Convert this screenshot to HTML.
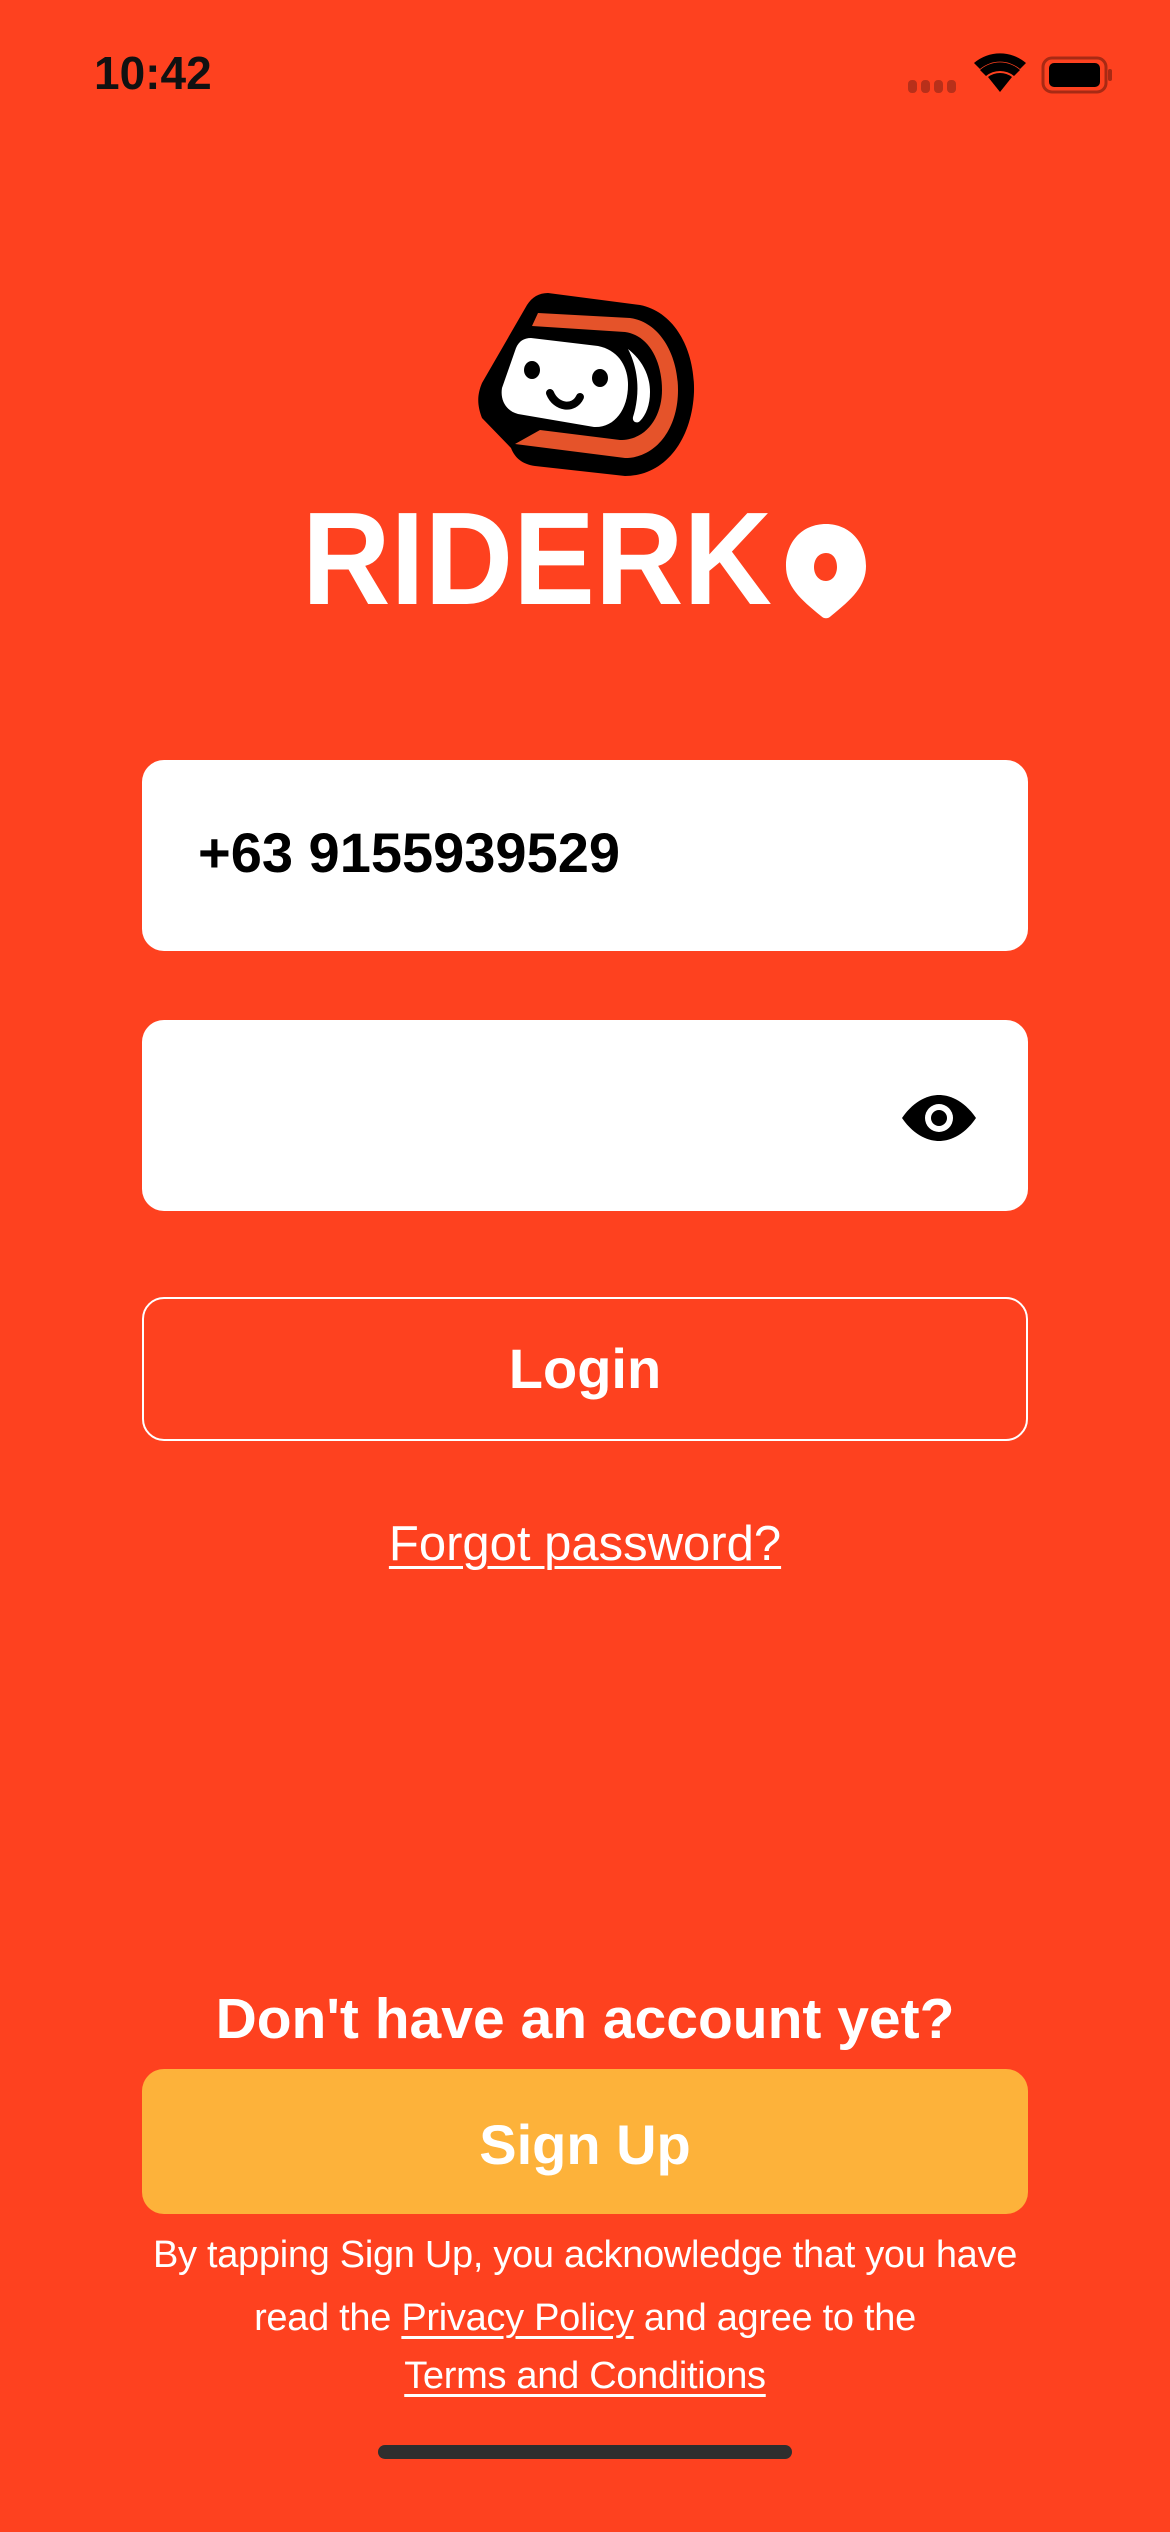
<!DOCTYPE html>
<html><head><meta charset="utf-8"><style>
html,body{margin:0;padding:0}
body{width:1170px;height:2532px;background:#FE411F;position:relative;overflow:hidden;font-family:"Liberation Sans",sans-serif;color:#fff}
.abs{position:absolute}
.field{position:absolute;left:142px;width:886px;height:191px;background:#fff;border-radius:22px}
.c{position:absolute;left:0;width:1170px;text-align:center}
u{text-decoration-thickness:3px;text-underline-offset:6px}
</style></head><body>
<div class="abs" style="left:94px;top:46px;font-size:46px;font-weight:bold;color:#111">10:42</div>
<svg class="abs" style="left:900px;top:50px" width="215" height="50" viewBox="0 0 215 50">
 <g fill="#B8301A"><rect x="8" y="30" width="9" height="13" rx="4"/><rect x="21" y="30" width="9" height="13" rx="4"/><rect x="34" y="30" width="9" height="13" rx="4"/><rect x="47" y="30" width="9" height="13" rx="4"/></g>
 <path d="M100 42 L88 27 A20 20 0 0 1 112 27 Z" fill="#000"/>
 <path d="M80 20 A30 30 0 0 1 120 20 L114 26 A22 22 0 0 0 86 26 Z" fill="#000"/>
 <path d="M74 13 A40 40 0 0 1 126 13 L120 19 A31 31 0 0 0 80 19 Z" fill="#000"/>
 <rect x="143" y="8" width="63" height="34" rx="9" fill="none" stroke="#A82A14" stroke-width="3"/>
 <rect x="149" y="13" width="51" height="24" rx="5" fill="#000"/>
 <rect x="208" y="19" width="4" height="12" rx="2" fill="#A82A14"/>
</svg>
<svg class="abs" style="left:0;top:0" width="1170" height="700" viewBox="0 0 1170 700">
 <path d="M548 293 L640 305 C675 312 695 350 694 392 C692 440 665 476 625 476 L535 466 C522 464 515 458 511 448 L482 418 C477 405 477 395 482 383 L527 305 C532 297 539 293 548 293 Z" fill="#000"/>
 <path d="M538 313 L630 318 C660 322 678 355 678 390 C678 430 655 458 625 458 L515 444 L540 430 L620 440 C648 440 662 415 662 390 C662 360 648 335 625 332 L532 326 Z" fill="#E5532A"/>
 <path d="M531 338 L598 346 C618 350 628 366 628 385 C628 410 614 428 594 427 L518 414 C506 411 500 400 502 388 L516 348 C519 341 524 338 531 338 Z" fill="#fff"/>
 <path d="M628 349 C642 360 650 375 650 392 C650 405 646 415 640 421 C637 424 632 422 633 417 C640 395 639 370 628 349 Z" fill="#fff"/>
 <ellipse cx="532" cy="370" rx="8" ry="9" fill="#000"/>
 <ellipse cx="600" cy="378" rx="8" ry="9" fill="#000"/>
 <path d="M550 393 C556 408 574 410 580 397" fill="none" stroke="#000" stroke-width="8" stroke-linecap="round"/>
 <text x="302" y="604" font-family="Liberation Sans" font-weight="bold" font-size="132" fill="#fff" textLength="470" lengthAdjust="spacingAndGlyphs">RIDERK</text>
 <path d="M826 524 C850 524 866 543 866 566 C866 586 852 599 831 616 C828 619 824 619 821 616 C800 599 786 586 786 566 C786 542 802 524 826 524 Z M826 553 C818 553 814 560 814 567 C814 575 819 581 826 581 C833 581 837 574 837 567 C837 559 833 553 826 553 Z" fill="#fff" fill-rule="evenodd"/>
</svg>
<div class="field" style="top:760px"><div class="abs" style="left:56px;top:60px;font-size:56px;font-weight:bold;color:#000">+63 9155939529</div></div>
<div class="field" style="top:1020px">
 <svg class="abs" style="left:758px;top:73px" width="78" height="50" viewBox="0 0 78 50"><path d="M2 25 C15 6 30 2 39 2 C48 2 63 6 76 25 C63 44 48 48 39 48 C30 48 15 44 2 25 Z" fill="#000"/><circle cx="39" cy="25" r="14" fill="#fff"/><circle cx="39" cy="25" r="8" fill="#000"/></svg>
</div>
<div class="abs" style="left:142px;top:1297px;width:882px;height:140px;border:2px solid #fff;border-radius:22px"></div>
<div class="c" style="top:1336px;font-size:56px;font-weight:bold">Login</div>
<div class="c" style="top:1516px;font-size:49px"><u>Forgot password?</u></div>
<div class="c" style="top:1986px;font-size:57px;font-weight:bold">Don't have an account yet?</div>
<div class="abs" style="left:142px;top:2069px;width:886px;height:145px;background:#FDB23A;border-radius:22px"></div>
<div class="c" style="top:2112px;font-size:56px;font-weight:bold">Sign Up</div>
<div class="c" style="top:2234px;font-size:38px;letter-spacing:-0.3px">By tapping Sign Up, you acknowledge that you have</div>
<div class="c" style="top:2297px;font-size:38px;letter-spacing:-0.3px">read the <u>Privacy Policy</u> and agree to the</div>
<div class="c" style="top:2355px;font-size:38px;letter-spacing:-0.3px"><u>Terms and Conditions</u></div>
<div class="abs" style="left:378px;top:2445px;width:414px;height:14px;border-radius:7px;background:#2E2E2E"></div>
</body></html>
